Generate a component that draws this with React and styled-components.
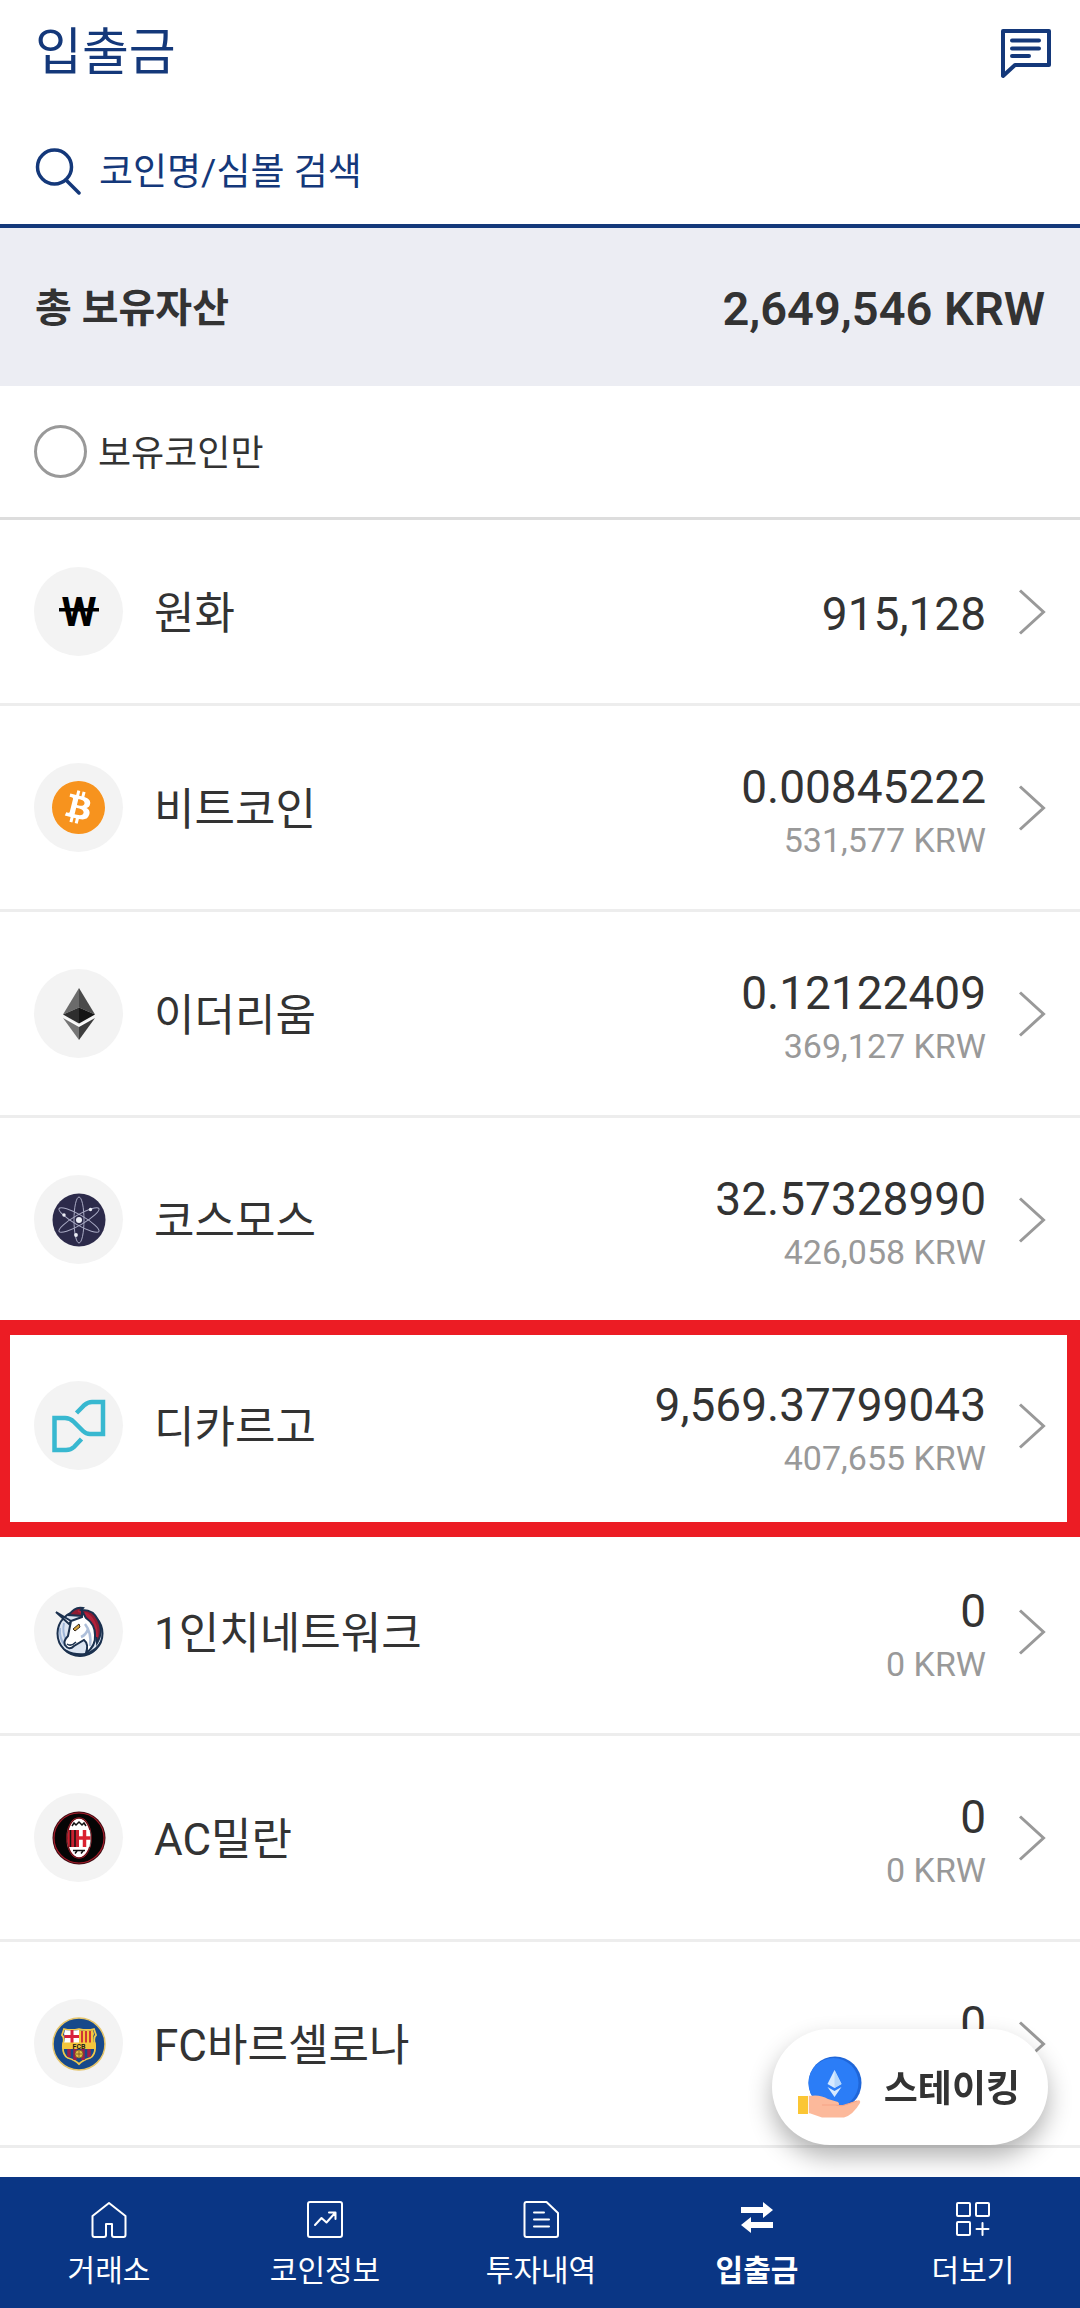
import React, { useState } from "react";
import styled, { createGlobalStyle, css } from "styled-components";
import { SiBitcoin } from "react-icons/si";

const GlobalStyle = createGlobalStyle`
  *, *::before, *::after { box-sizing: border-box; }
  body {
    margin: 0;
    background: #fff;
    color: #333;
    font-family: Roboto, "Noto Sans CJK KR", sans-serif;
  }
  button, input { font: inherit; color: inherit; }
  button { border: 0; padding: 0; background: none; cursor: pointer; }
`;

const Page = styled.div`
  display: flex;
  flex-direction: column;
  min-height: 100vh;
`;

const Header = styled.header`
  display: flex;
  align-items: center;
  justify-content: space-between;
  height: 104px;
  padding: 2px 27px 0 35px;
  color: #14387a;
`;

const Title = styled.h1`
  margin: 0;
  font-size: 51px;
  line-height: 72px;
  font-weight: 400;
`;

const IconButton = styled.button`
  display: flex;
`;

const SearchBar = styled.label`
  display: flex;
  align-items: center;
  gap: 17px;
  height: 124px;
  padding: 14px 35px 0;
  border-bottom: 4px solid #14387a;
  color: #14387a;
`;

const SearchInput = styled.input`
  flex: 1;
  min-width: 0;
  padding: 4px 0 0;
  border: 0;
  outline: 0;
  background: none;
  font-size: 37px;
  line-height: 52px;
  &::placeholder { color: #14387a; opacity: 1; }
`;

const TotalBar = styled.section`
  display: flex;
  align-items: center;
  justify-content: space-between;
  height: 158px;
  padding: 4px 35px 0;
  background: #ecedf3;
`;

const TotalLabel = styled.h2`
  margin: 0;
  font-size: 40px;
  line-height: 56px;
  font-weight: 700;
`;

const TotalAmount = styled.strong`
  font-size: 47px;
  line-height: 56px;
  font-weight: 600;
`;

const OwnedFilter = styled.label`
  display: flex;
  align-items: center;
  gap: 11px;
  height: 134px;
  padding: 0 34px;
  border-bottom: 3px solid #ddd;
  font-size: 36px;
  line-height: 52px;
`;

const FilterText = styled.span`
  padding-top: 4px;
`;

const RoundCheck = styled.input`
  appearance: none;
  width: 53px;
  height: 53px;
  margin: 0;
  border: 3px solid #999;
  border-radius: 50%;
  background: #fff;
  &:checked { border-width: 14px; border-color: #14387a; }
`;

const CoinList = styled.ul`
  margin: 0;
  padding: 0;
  list-style: none;
`;

const CoinItem = styled.li`
  position: relative;
  ${(p) =>
    p.$highlighted &&
    css`
      z-index: 1;
      &::after {
        content: "";
        position: absolute;
        inset: -4px 0 -7px;
        border: solid #ec1c24;
        border-width: 15px 13px 15px 10px;
        pointer-events: none;
      }
    `}
`;

const CoinRow = styled.button`
  display: flex;
  align-items: center;
  width: 100%;
  height: ${(p) => (p.$single ? 186 : 206)}px;
  padding: 0 34px;
  border-bottom: 3px solid #ededed;
  text-align: left;
`;

const CoinBadge = styled.span`
  display: flex;
  align-items: center;
  justify-content: center;
  width: 89px;
  height: 89px;
  border-radius: 50%;
  background: #f3f3f3;
`;

const BitcoinDisc = styled.span`
  display: flex;
  border-radius: 50%;
  background: #fff;
  color: #f7931e;
`;

const CoinName = styled.span`
  flex: 1;
  margin-left: 31px;
  padding-top: 4px;
  font-size: 44px;
  line-height: 64px;
`;

const Balance = styled.span`
  display: flex;
  flex-direction: column;
  align-items: flex-end;
  margin-right: 32px;
  padding-top: ${(p) => (p.$single ? 4 : 8)}px;
`;

const Quantity = styled.span`
  font-size: 46px;
  line-height: 56px;
`;

const Valuation = styled.span`
  font-size: 34px;
  line-height: 50px;
  color: #999;
`;

const StakingButton = styled.button`
  position: fixed;
  right: 32px;
  bottom: 163px;
  z-index: 2;
  display: flex;
  align-items: center;
  gap: 22px;
  height: 116px;
  padding: 0 28px 0 25px;
  border-radius: 58px;
  background: #fff;
  box-shadow: 0 12px 24px rgba(0, 0, 0, 0.3);
  font-size: 37px;
  line-height: 54px;
  font-weight: 700;
`;

const StakingText = styled.span`
  padding-top: 6px;
`;

const TabBar = styled.nav`
  position: sticky;
  bottom: 0;
  z-index: 3;
  display: grid;
  grid-template-columns: repeat(5, 1fr);
  height: 131px;
  margin-top: auto;
  background: #0a3685;
`;

const Tab = styled.a`
  display: flex;
  flex-direction: column;
  align-items: center;
  gap: 10px;
  padding: 22px 0 0 2px;
  color: #fff;
  font-size: 30px;
  line-height: 44px;
  font-weight: ${(p) => (p.$active ? 700 : 400)};
  text-decoration: none;
`;

const ChatIcon = () => (
  <svg width="54" height="54" viewBox="0 0 54 54" fill="none" stroke="currentColor" strokeWidth="4" strokeLinecap="round" strokeLinejoin="round" aria-hidden="true">
    <path d="M4 5H50V39H16L4 50Z" />
    <path d="M13 14.500H40M13 22.500H40M13 30H30" />
  </svg>
);

const SearchIcon = () => (
  <svg width="47" height="47" viewBox="0 0 47 47" fill="none" stroke="currentColor" strokeWidth="3.500" strokeLinecap="round" aria-hidden="true">
    <circle cx="19.500" cy="19" r="17" />
    <path d="M31 32L44 45" />
  </svg>
);

const Chevron = () => (
  <svg width="28" height="46" viewBox="0 0 28 46" fill="none" stroke="#999" strokeWidth="3" aria-hidden="true">
    <path d="M2 1.500L25.500 23L2 44.500" />
  </svg>
);

const WonLogo = () => (
  <svg width="60" height="60" viewBox="0 0 60 60" aria-hidden="true">
    <text x="30" y="44" textAnchor="middle" fontFamily="Roboto, sans-serif" fontWeight="700" fontSize="40">W</text>
    <rect x="10" y="26" width="40" height="3.500" />
  </svg>
);

const BitcoinLogo = () => (
  <BitcoinDisc>
    <SiBitcoin size={53} aria-hidden="true" />
  </BitcoinDisc>
);

const EthereumLogo = () => (
  <svg width="32" height="52" viewBox="0 0 32 52" aria-hidden="true">
    <path d="M16 0L0 26.500L16 19.500Z" fill="#6b6b6b" />
    <path d="M16 0L32 26.500L16 19.500Z" fill="#4a4a4a" />
    <path d="M0 26.500L16 19.500V35.500Z" fill="#2e2e2e" />
    <path d="M32 26.500L16 19.500V35.500Z" fill="#151515" />
    <path d="M0 28.500L16 37.500L32 28.500L16 40Z" fill="#fff" />
    <path d="M0 30L16 39V52Z" fill="#757575" />
    <path d="M32 30L16 39V52Z" fill="#3d3d3d" />
  </svg>
);

const CosmosLogo = () => (
  <svg width="54" height="54" viewBox="0 0 54 54" aria-hidden="true">
    <circle cx="27" cy="27" r="26.500" fill="#2c2a4a" />
    <g fill="none" stroke="#a9aac4" strokeWidth="1">
      <ellipse cx="27" cy="27" rx="5" ry="23" />
      <ellipse cx="27" cy="27" rx="5" ry="23" transform="rotate(60 27 27)" />
      <ellipse cx="27" cy="27" rx="5" ry="23" transform="rotate(-60 27 27)" />
    </g>
    <g fill="#eceef6">
      <circle cx="27" cy="27" r="3" />
      <circle cx="12" cy="22" r="1.700" />
      <circle cx="38.500" cy="16.500" r="1.700" />
      <circle cx="24" cy="42" r="1.900" />
    </g>
  </svg>
);

const DkargoLogo = () => (
  <svg width="54" height="54" viewBox="0 0 54 54" fill="none" stroke="#38b8d0" strokeWidth="4.500" aria-hidden="true">
    <path d="M24.500 14L32.500 6Q36 3 40 3H51V35H38Q34 35 31 32L22 23Q18 19 13 19H2.500V51H14Q19 51 22 48L29.500 40" />
  </svg>
);

const OneInchLogo = () => (
  <svg width="50" height="52" viewBox="0 0 50 52" aria-hidden="true">
    <circle cx="26" cy="27.500" r="22.500" fill="#dce5f2" stroke="#1b314f" strokeWidth="2" />
    <path d="M6 22Q5 32 11 40M10 17Q8 26 12 34" fill="none" stroke="#9fb6d8" strokeWidth="2" />
    <path d="M15 9Q21 0 29 2L27 4Q39 3 44 14Q50 25 43 37Q42 25 36 19L29 10Z" fill="#8d1c32" stroke="#1b314f" strokeWidth="2" />
    <path d="M31 7Q43 13 43 31M24 5Q36 8 40 22" fill="none" stroke="#b3213a" strokeWidth="2" />
    <path d="M2 6L17 15L15 18Z" fill="#eef2f8" stroke="#1b314f" strokeWidth="2" />
    <path d="M17 15L28 11L28 5L32 12Q41 18 41 29Q42 40 32 47Q35 38 30 34L20 40Q15 45 11 39Q9 35 14 30Z" fill="#fff" stroke="#1b314f" strokeWidth="2" />
    <path d="M31 18Q38 27 36 40M27 31Q32 29 34 23" fill="none" stroke="#aebfda" strokeWidth="2.500" />
    <path d="M19 23L25 18L26 21L21 25Z" fill="#d6a23a" stroke="#3b2c1c" strokeWidth="1" />
    <path d="M13 38Q17 41 22 36" fill="none" stroke="#1b314f" strokeWidth="1.500" />
    <path d="M8 42Q17 52 30 50Q44 47 47 34Q42 44 31 47Q20 48 13 44" fill="#1b314f" />
  </svg>
);

const MilanLogo = () => (
  <svg width="54" height="54" viewBox="0 0 54 54" aria-hidden="true">
    <circle cx="27" cy="27" r="26.500" fill="#3a0a10" />
    <circle cx="27" cy="27" r="25" fill="#050505" stroke="#a01c2a" strokeWidth="1.200" />
    <ellipse cx="27" cy="27" rx="12" ry="20" fill="#fff" stroke="#c2202f" strokeWidth="1.500" />
    <path d="M16 19H38Q40 27 38 36H16Q14 27 16 19Z" fill="#fff" />
    <path d="M16 19H27V36H16Q14 27 16 19Z" fill="#c8202f" />
    <path d="M18.500 19V36M23 19V36" stroke="#111" strokeWidth="1.500" />
    <path d="M32.500 19V36M27 27H38.500" stroke="#d9202f" strokeWidth="3.500" />
    <path d="M20 15L22 12L24 14L27 11L30 14L32 12L34 15M21 39.500H33M23 42.500L25 40M29 42.500L31 40" stroke="#111" strokeWidth="1.500" fill="none" />
    <ellipse cx="27" cy="27" rx="12" ry="20" fill="none" stroke="#111" strokeWidth=".6" />
  </svg>
);

const BarcelonaLogo = () => (
  <svg width="54" height="54" viewBox="0 0 54 54" aria-hidden="true">
    <circle cx="27" cy="27" r="26" fill="#17498a" stroke="#e6c56a" strokeWidth="1.500" />
    <path d="M12 12Q19 14 27 12Q35 14 42 12L44 18Q41 21 43 27Q44 38 38 41Q31 43 27 47Q23 43 16 41Q10 38 11 27Q13 21 10 18Z" fill="#17498a" stroke="#f1c84b" strokeWidth="1.800" />
    <path d="M13 13Q20 14.500 27 13V26H12Q14 20 12 17Z" fill="#fff" />
    <path d="M20 13V26M12.500 19.500H27" stroke="#d8213b" strokeWidth="3" />
    <path d="M27 13Q34 14.500 41 13L42 17Q40 21 42 26H27Z" fill="#f6c83d" />
    <path d="M30 14V26M34 14V26M38 14V26" stroke="#c92a35" strokeWidth="1.800" />
    <path d="M17 32V40M23 32V43M31 32V43M37 32V40" stroke="#9b1f4b" strokeWidth="3.500" />
    <rect x="10.500" y="25.500" width="33" height="6.500" fill="#f4c63c" />
    <text x="27" y="31.500" textAnchor="middle" fontFamily="Roboto, sans-serif" fontWeight="700" fontSize="7" fill="#1a1a1a">FCB</text>
    <circle cx="27" cy="37" r="4" fill="#e8bd45" stroke="#7a5a1a" strokeWidth=".8" />
    <path d="M24 37H30M27 34V40" stroke="#7a5a1a" strokeWidth=".8" />
  </svg>
);

const StakingIcon = () => (
  <svg width="65" height="62" viewBox="0 0 65 62" aria-hidden="true">
    <circle cx="38" cy="27" r="26.500" fill="#1f66d8" />
    <circle cx="36.500" cy="27" r="25" fill="#2b7df7" />
    <path d="M37.500 14L44.500 28L37.500 32L30.500 28Z" fill="#d6eaff" />
    <path d="M37.500 14L44.500 28L37.500 32Z" fill="#b5d7fc" />
    <path d="M30.500 31L37.500 35L44.500 31L37.500 41Z" fill="#d6eaff" />
    <rect x="1" y="40" width="10" height="18" fill="#fbc634" />
    <path d="M11 40L13 39V58L11 57Z" fill="#fff3e8" />
    <path d="M12 40Q23 38 31 43L41 46Q44 49 39 50L48 49L59 45Q64 43 63 47Q56 59 47 61.500H25L12 57Z" fill="#fcb99b" />
    <path d="M25 49H39Q43 50 46 49.500L60 45" fill="none" stroke="#f6a486" strokeWidth="1.200" />
  </svg>
);

const TabSvg = ({ children, strokeWidth = 2 }) => (
  <svg width="40" height="40" viewBox="0 0 40 40" fill="none" stroke="currentColor" strokeWidth={strokeWidth} strokeLinecap="round" strokeLinejoin="round" aria-hidden="true">
    {children}
  </svg>
);

const HomeIcon = () => (
  <TabSvg>
    <path d="M20 4L36.500 17V36Q36.500 38 34.500 38H25Q23 38 23 36V25H17V36Q17 38 15 38H5.500Q3.500 38 3.500 36V17Z" />
  </TabSvg>
);

const ChartIcon = () => (
  <TabSvg>
    <rect x="3" y="3" width="34" height="35" rx="2" />
    <path d="M10 26L16.500 19L21.500 23.500L30 14M24 13.500H30.500V20" />
  </TabSvg>
);

const DocumentIcon = () => (
  <TabSvg>
    <path d="M5.500 3H25.500L37 14V36Q37 38 35 38H5.500Q3.500 38 3.500 36V5Q3.500 3 5.500 3Z" />
    <path d="M13 13.500H23M13 20.500H28M13 27.500H28" />
  </TabSvg>
);

const TransferIcon = () => (
  <TabSvg strokeWidth={0}>
    <path fill="currentColor" d="M4 8H26V3L36 11L26 19V14H4ZM36 23H14V18L4 26L14 34V29H36Z" />
  </TabSvg>
);

const MoreIcon = () => (
  <TabSvg>
    <rect x="4" y="4" width="13" height="13" rx="1" />
    <rect x="23" y="4" width="13" height="13" rx="1" />
    <rect x="4" y="23" width="13" height="13" rx="1" />
    <path d="M29.500 24V36M23.500 30H35.500" />
  </TabSvg>
);

const COINS = [
  { name: "원화", quantity: "915,128", Logo: WonLogo },
  { name: "비트코인", quantity: "0.00845222", value: "531,577 KRW", Logo: BitcoinLogo },
  { name: "이더리움", quantity: "0.12122409", value: "369,127 KRW", Logo: EthereumLogo },
  { name: "코스모스", quantity: "32.57328990", value: "426,058 KRW", Logo: CosmosLogo },
  { name: "디카르고", quantity: "9,569.37799043", value: "407,655 KRW", Logo: DkargoLogo, highlighted: true },
  { name: "1인치네트워크", quantity: "0", value: "0 KRW", Logo: OneInchLogo },
  { name: "AC밀란", quantity: "0", value: "0 KRW", Logo: MilanLogo },
  { name: "FC바르셀로나", quantity: "0", value: "0 KRW", Logo: BarcelonaLogo },
];

const TABS = [
  { label: "거래소", Icon: HomeIcon },
  { label: "코인정보", Icon: ChartIcon },
  { label: "투자내역", Icon: DocumentIcon },
  { label: "입출금", Icon: TransferIcon, active: true },
  { label: "더보기", Icon: MoreIcon },
];

export default function App() {
  const [query, setQuery] = useState("");
  const [ownedOnly, setOwnedOnly] = useState(false);
  const coins = COINS.filter(
    (coin) => coin.name.includes(query) && (!ownedOnly || coin.quantity !== "0")
  );

  return (
    <Page>
      <GlobalStyle />
      <Header>
        <Title>입출금</Title>
        <IconButton type="button" aria-label="문의">
          <ChatIcon />
        </IconButton>
      </Header>
      <SearchBar>
        <SearchIcon />
        <SearchInput
          type="text"
          placeholder="코인명/심볼 검색"
          aria-label="코인명/심볼 검색"
          value={query}
          onChange={(e) => setQuery(e.target.value)}
        />
      </SearchBar>
      <TotalBar>
        <TotalLabel>총 보유자산</TotalLabel>
        <TotalAmount>2,649,546 KRW</TotalAmount>
      </TotalBar>
      <OwnedFilter>
        <RoundCheck type="checkbox" checked={ownedOnly} onChange={(e) => setOwnedOnly(e.target.checked)} />
        <FilterText>보유코인만</FilterText>
      </OwnedFilter>
      <CoinList>
        {coins.map(({ name, quantity, value, Logo, highlighted }) => (
          <CoinItem key={name} $highlighted={highlighted}>
            <CoinRow type="button" $single={!value}>
              <CoinBadge>
                <Logo />
              </CoinBadge>
              <CoinName>{name}</CoinName>
              <Balance $single={!value}>
                <Quantity>{quantity}</Quantity>
                {value && <Valuation>{value}</Valuation>}
              </Balance>
              <Chevron />
            </CoinRow>
          </CoinItem>
        ))}
      </CoinList>
      <StakingButton type="button">
        <StakingIcon />
        <StakingText>스테이킹</StakingText>
      </StakingButton>
      <TabBar>
        {TABS.map(({ label, Icon, active }) => (
          <Tab key={label} href="#" $active={active} aria-current={active ? "page" : undefined}>
            <Icon />
            {label}
          </Tab>
        ))}
      </TabBar>
    </Page>
  );
}
